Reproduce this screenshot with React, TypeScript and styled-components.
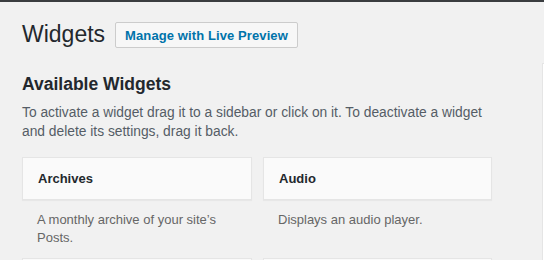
import styled, { createGlobalStyle } from 'styled-components';

const GlobalStyle = createGlobalStyle`
  html, body {
    margin: 0;
    padding: 0;
    background: #f1f1f1;
    overflow: hidden;
  }
  body {
    font-family: "Liberation Sans", Arial, sans-serif;
    color: #23282d;
  }
`

const TopBar = styled.div`
  height: 2px;
  background-color: #3a3d40;
`

const Wrap = styled.div`
  padding: 0 0 0 22px;
`

const Header = styled.header`
  display: flex;
  align-items: flex-start;
  gap: 10px;
  padding-top: 18px;
  height: 28px;
`

const Title = styled.h1`
  margin: 0;
  font-size: 23px;
  font-weight: 400;
  line-height: 29px;
  color: #23282d;
`

const PreviewButton = styled.button`
  height: 26px;
  padding: 0 9px;
  margin-top: 2px;
  border: 1px solid #cccccc;
  border-radius: 2px;
  background-color: #f7f7f7;
  color: #0073aa;
  font-family: inherit;
  font-size: 13px;
  font-weight: 600;
  letter-spacing: 0.1px;
  cursor: pointer;
`

const Columns = styled.div`
  display: flex;
  gap: 50px;
  margin-top: 13px;
`

const Available = styled.section`
  width: 470px;
  flex-shrink: 0;
`

const SectionTitle = styled.h2`
  margin: 0;
  padding-top: 12px;
  font-size: 17.5px;
  font-weight: 600;
  line-height: 22px;
  color: #23282d;
`

const Intro = styled.p`
  margin: 8px 0 0;
  font-size: 13.8px;
  line-height: 19px;
  color: #555d66;
  width: 470px;
`

const WidgetGrid = styled.div`
  display: grid;
  grid-template-columns: 230px 229px;
  column-gap: 11px;
  row-gap: 11px;
  margin-top: 16px;
`

const Widget = styled.div`
  display: flex;
  flex-direction: column;
`

const WidgetTop = styled.div`
  height: 41px;
  display: flex;
  align-items: center;
  padding: 0 15px;
  background-color: #fafafa;
  border: 1px solid #e5e5e5;
  box-shadow: 0 1px 1px rgba(0, 0, 0, 0.04);
  font-size: 13px;
  font-weight: 600;
  color: #23282d;
`

const WidgetDesc = styled.div`
  margin-top: 11px;
  padding: 0 15px;
  font-size: 13px;
  line-height: 18px;
  color: #666666;
  min-height: 36px;
`

const Sidebar = styled.aside`
  width: 260px;
  flex-shrink: 0;
  margin-top: 2px;
  height: 220px;
  background-color: #ffffff;
  border: 1px solid #e5e5e5;
`

const widgets = [
  { name: 'Archives', desc: 'A monthly archive of your site’s Posts.' },
  { name: 'Audio', desc: 'Displays an audio player.' },
]

export default function App() {
  return (
    <>
      <GlobalStyle />
      <TopBar />
      <Wrap>
        <Header>
          <Title>Widgets</Title>
          <PreviewButton>Manage with Live Preview</PreviewButton>
        </Header>
        <Columns>
          <Available>
            <SectionTitle>Available Widgets</SectionTitle>
            <Intro>
              To activate a widget drag it to a sidebar or click on it. To deactivate a widget and delete its settings, drag it back.
            </Intro>
            <WidgetGrid>
              {widgets.map((w) => (
                <Widget key={w.name}>
                  <WidgetTop>{w.name}</WidgetTop>
                  <WidgetDesc>{w.desc}</WidgetDesc>
                </Widget>
              ))}
              <WidgetTop />
              <WidgetTop />
            </WidgetGrid>
          </Available>
          <Sidebar />
        </Columns>
      </Wrap>
    </>
  )
}
